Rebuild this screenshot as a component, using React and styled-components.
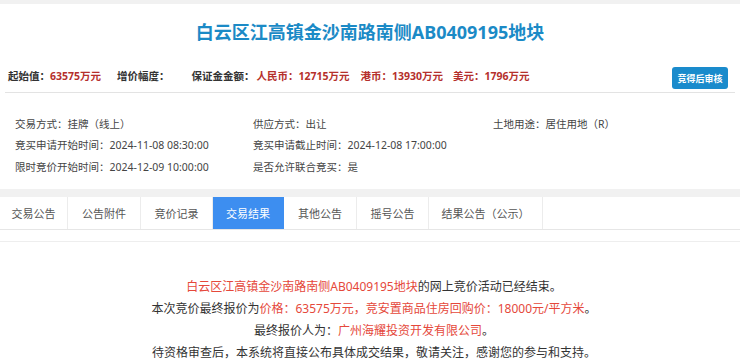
import React from 'react';
import styled, { createGlobalStyle } from 'styled-components';

const GlobalStyle = createGlobalStyle`
    body {
        margin: 0;
        background: #ffffff;
        font-family: "Noto Sans", "Noto Sans CJK SC", sans-serif;
        color: #333;
    }
`;

const Page = styled.div`
    width: 740px;
    height: 364px;
    overflow: hidden;
    display: flex;
    flex-direction: column;
`;

const GreyBand = styled.div`
    height: ${props => props.h}px;
    background: #f1f1f1;
    flex-shrink: 0;
`;

const Title = styled.h1`
    margin: 0;
    height: 56px;
    line-height: 56px;
    text-align: center;
    font-size: 18px;
    font-weight: 700;
    color: #1b8ac6;
`;

const PriceRow = styled.div`
    margin: 0 5px;
    height: 33px;
    display: flex;
    align-items: center;
    border-bottom: 1px solid #e3e3e3;
    font-size: 10.5px;
    font-weight: 700;
    white-space: nowrap;
`;

const Label = styled.span`
    color: #333;
    margin-left: ${props => props.gap || 0}px;
`;

const Money = styled.span`
    color: #b5302c;
    margin-left: ${props => props.gap || 0}px;
`;

const AuditButton = styled.button`
    margin-left: auto;
    margin-right: 7px;
    margin-top: 5px;
    height: 22px;
    width: 56px;
    padding: 0;
    border: none;
    border-radius: 3px;
    background: #1a8bcc;
    color: #fff;
    font-family: inherit;
    font-size: 9px;
    font-weight: 700;
`;

const InfoGrid = styled.div`
    display: grid;
    grid-template-columns: 238px 240px 1fr;
    grid-auto-rows: 21.5px;
    align-items: center;
    padding: 21px 0 11px 15px;
    font-size: 10.5px;
    color: #444;
    white-space: nowrap;
`;

const InfoItem = styled.div`
    line-height: 21.5px;
`;

const TabBar = styled.div`
    display: flex;
    height: 32px;
    border-bottom: 1px solid #e6e6e6;
    flex-shrink: 0;
`;

const Tab = styled.div`
    width: ${props => props.w}px;
    display: flex;
    align-items: center;
    justify-content: center;
    box-sizing: border-box;
    font-size: 11px;
    color: ${props => (props.active ? '#fff' : '#555')};
    background: ${props => (props.active ? '#3d8ef0' : '#fff')};
    border-right: 1px solid ${props => (props.active ? '#3d8ef0' : '#ececec')};
`;

const TabGap = styled.div`
    height: 11px;
    border-bottom: 1px solid #eeeeee;
    flex-shrink: 0;
`;

const Result = styled.div`
    padding: 34px 0 0 8px;
    text-align: center;
    font-size: 12px;
    line-height: 22px;
    color: #333;
    white-space: nowrap;
`;

const Red = styled.span`
    color: #e5483b;
`;

const tabs = [
    { name: '交易公告', w: 68 },
    { name: '公告附件', w: 73 },
    { name: '竞价记录', w: 72 },
    { name: '交易结果', w: 71, active: true },
    { name: '其他公告', w: 73 },
    { name: '摇号公告', w: 72 },
    { name: '结果公告（公示）', w: 114 },
];

const App = () => {
    return (
        <Page>
            <GlobalStyle />
            <GreyBand h={4} />
            <Title>白云区江高镇金沙南路南侧AB0409195地块</Title>
            <PriceRow>
                <Label gap={3}>起始值：</Label>
                <Money>63575万元</Money>
                <Label gap={16}>增价幅度：</Label>
                <Label gap={22}>保证金金额：</Label>
                <Money gap={2}>人民币：12715万元</Money>
                <Money gap={11}>港币：13930万元</Money>
                <Money gap={10}>美元：1796万元</Money>
                <AuditButton>竞得后审核</AuditButton>
            </PriceRow>
            <InfoGrid>
                <InfoItem>交易方式：挂牌（线上）</InfoItem>
                <InfoItem>供应方式：出让</InfoItem>
                <InfoItem>土地用途：居住用地（R）</InfoItem>
                <InfoItem>竞买申请开始时间：2024-11-08 08:30:00</InfoItem>
                <InfoItem>竞买申请截止时间：2024-12-08 17:00:00</InfoItem>
                <InfoItem />
                <InfoItem>限时竞价开始时间：2024-12-09 10:00:00</InfoItem>
                <InfoItem>是否允许联合竞买：是</InfoItem>
            </InfoGrid>
            <GreyBand h={8} />
            <TabBar>
                {tabs.map(t => (
                    <Tab key={t.name} w={t.w} active={t.active}>{t.name}</Tab>
                ))}
            </TabBar>
            <TabGap />
            <Result>
                <div><Red>白云区江高镇金沙南路南侧AB0409195地块</Red>的网上竞价活动已经结束。</div>
                <div>本次竞价最终报价为<Red>价格：63575万元，竞安置商品住房回购价：18000元/平方米</Red>。</div>
                <div>最终报价人为：<Red>广州海耀投资开发有限公司</Red>。</div>
                <div>待资格审查后，本系统将直接公布具体成交结果，敬请关注，感谢您的参与和支持。</div>
            </Result>
        </Page>
    );
};

export default App;
